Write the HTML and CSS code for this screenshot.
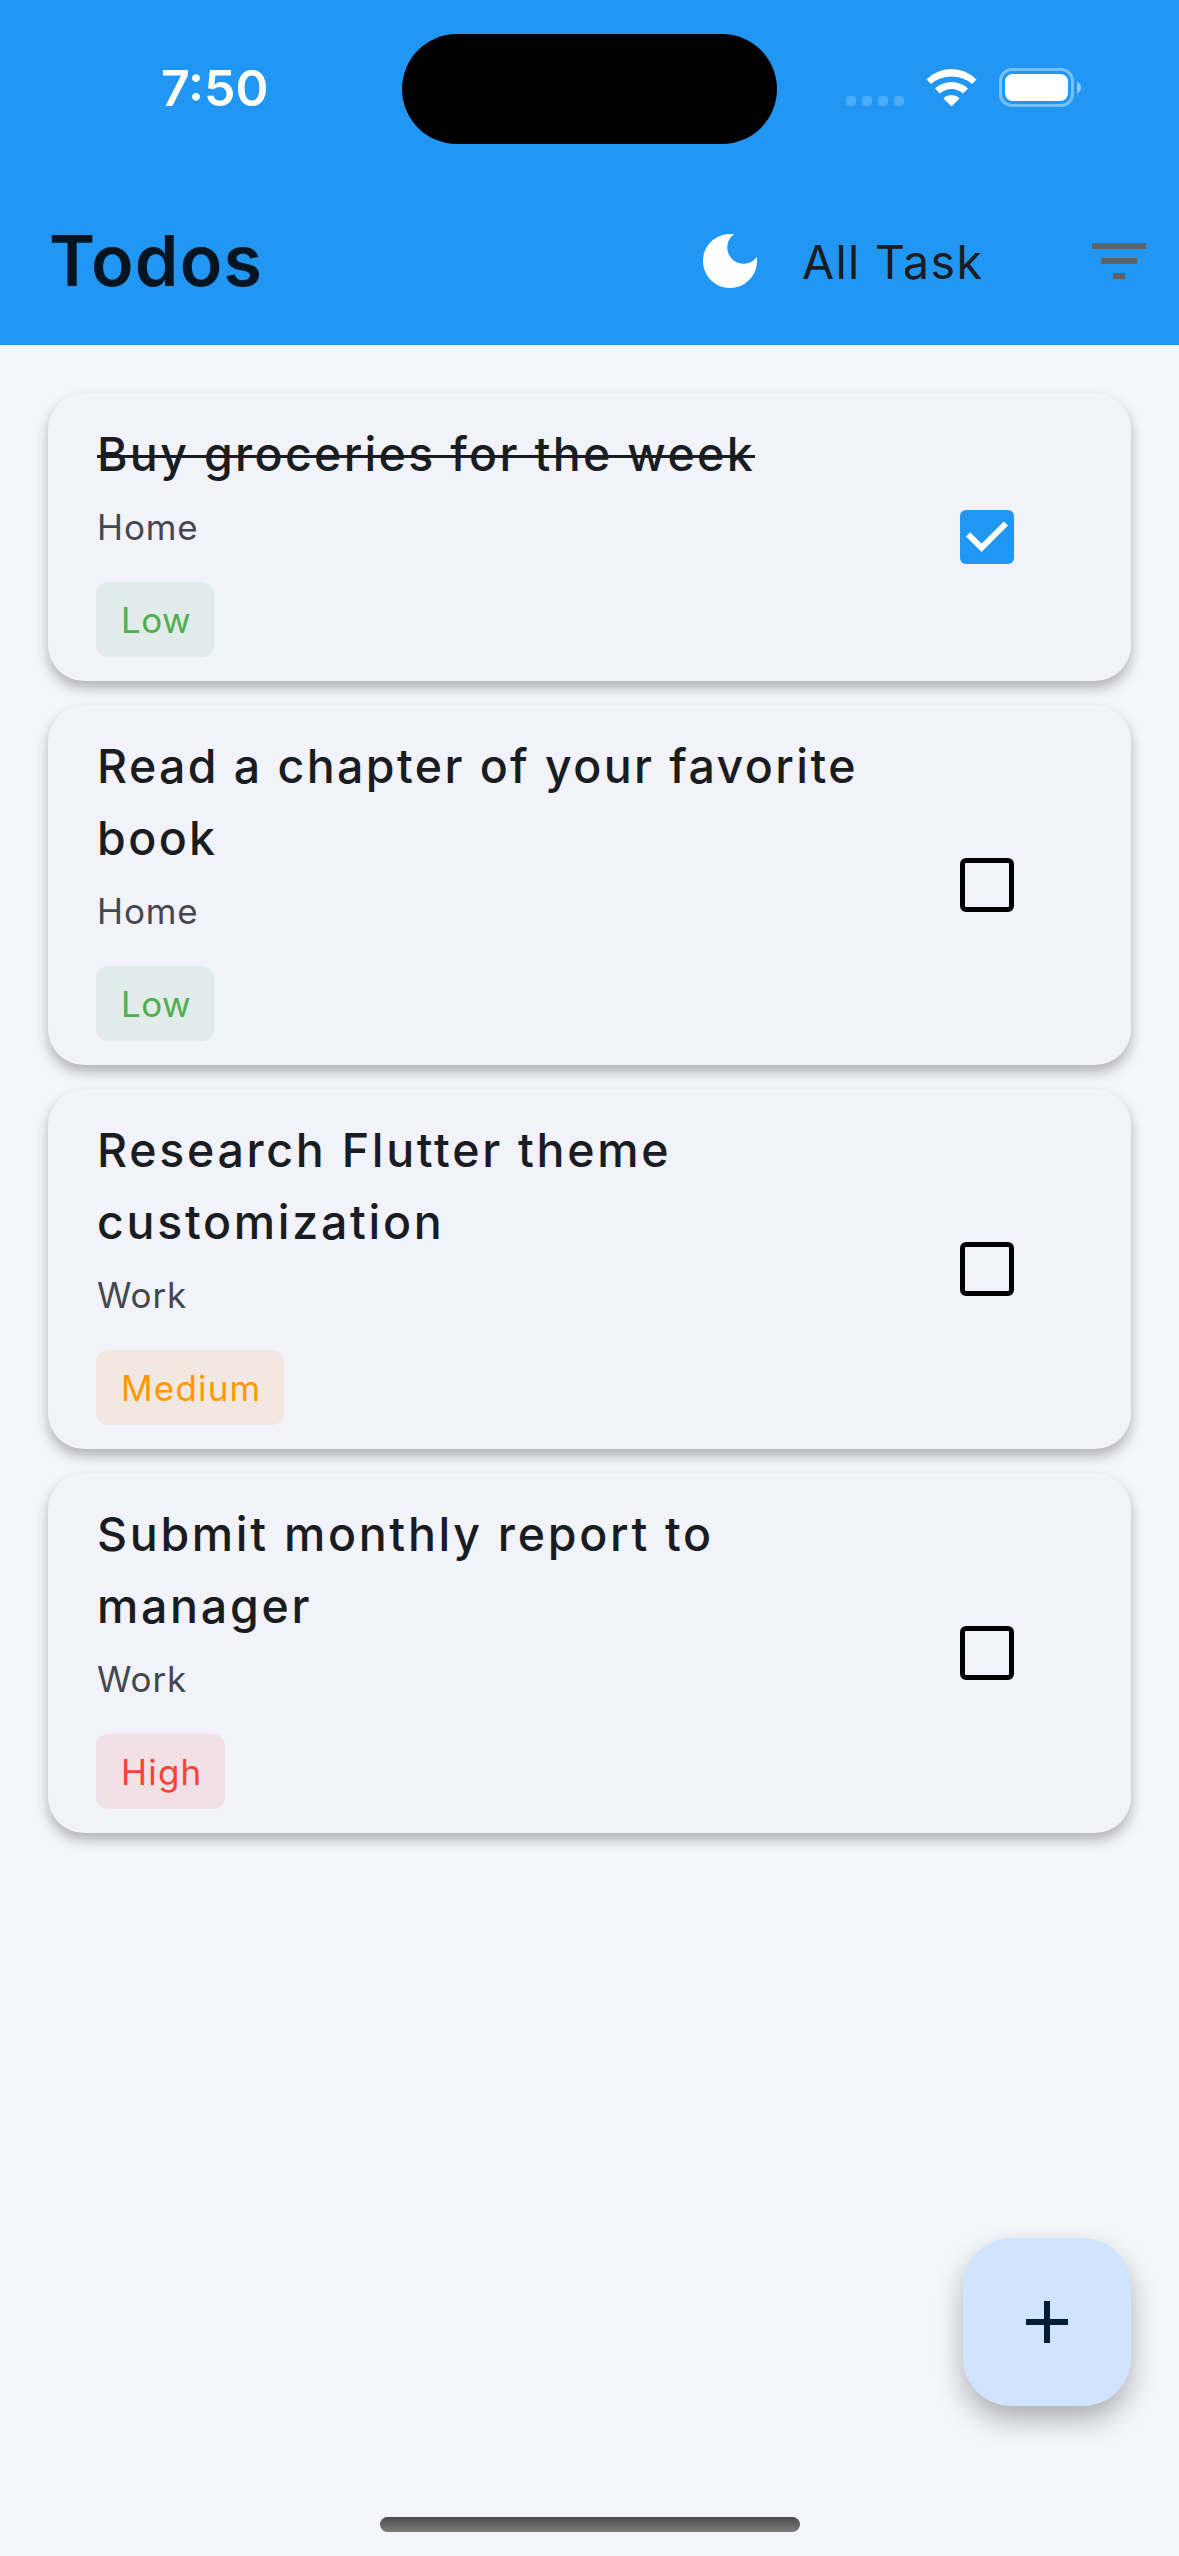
FILE: index.html
```html
<!DOCTYPE html>
<html lang="en">
<head>
<meta charset="utf-8">
<title>Todos</title>
<link rel="stylesheet" href="styles.css">
</head>
<body>
<div class="screen">
  <header class="header">
    <div class="status">
      <span class="time">7:50</span>
      <span class="island"></span>
      <svg class="signal" viewBox="0 0 58 12"><rect x="0" y="1" width="10" height="10" rx="3"/><rect x="16" y="1" width="10" height="10" rx="3"/><rect x="32" y="1" width="10" height="10" rx="3"/><rect x="48" y="1" width="10" height="10" rx="3"/></svg>
      <svg class="wifi" viewBox="0 0 51 37"><path d="M0.500 10.500Q11 0 25.500 0T50.500 10.500L46 15Q37.500 7.500 25.500 7.500T5 15Z"/><path d="M9 19.500Q16 13 25.500 13T42 19.500L37 24.500Q32 20 25.500 20T14 24.500Z"/><path d="M18 28.500Q21 26 25.500 26T33 28.500Q33.500 29.500 33 30L26.500 36.500Q25.500 37.500 24.500 36.500L18 30Q17.500 29.500 18 28.500Z"/></svg>
      <svg class="battery" viewBox="0 0 82 39"><rect class="shell" x="1.500" y="1.500" width="72" height="36" rx="11.500"/><rect x="6" y="6" width="63" height="27" rx="7.500"/><path class="nub" d="M78 13.500Q82 15.500 82 19.500T78 25.500Z"/></svg>
    </div>
    <div class="toolbar">
      <h1 class="title">Todos</h1>
      <svg class="moon" viewBox="0 0 24 24"><path d="M12 3c-4.970 0-9 4.030-9 9s4.030 9 9 9 9-4.030 9-9c0-.460-.040-.920-.100-1.360-.980 1.370-2.580 2.260-4.400 2.260-2.980 0-5.400-2.420-5.400-5.400 0-1.810.890-3.420 2.260-4.400-.440-.060-.900-.100-1.360-.100z"/></svg>
      <span class="filter-name">All Task</span>
      <svg class="filter" viewBox="0 0 24 24"><path d="M10 18h4v-2h-4v2zM3 6v2h18V6H3zm3 7h12v-2H6v2z"/></svg>
    </div>
  </header>
  <main class="list">
    <article class="card">
      <div class="info"><h2 class="task done">Buy groceries for the week</h2><p class="category">Home</p><span class="chip low">Low</span></div>
      <span class="box checked"><svg viewBox="0 0 54 54"><path d="M8.100 24.300L21.600 37.800L45.900 13.500"/></svg></span>
    </article>
    <article class="card">
      <div class="info"><h2 class="task">Read a chapter of your favorite<br>book</h2><p class="category">Home</p><span class="chip low">Low</span></div>
      <span class="box"></span>
    </article>
    <article class="card">
      <div class="info"><h2 class="task loose">Research Flutter theme<br>customization</h2><p class="category">Work</p><span class="chip medium">Medium</span></div>
      <span class="box"></span>
    </article>
    <article class="card">
      <div class="info"><h2 class="task loose">Submit monthly report to<br>manager</h2><p class="category">Work</p><span class="chip high">High</span></div>
      <span class="box"></span>
    </article>
  </main>
  <button class="fab" aria-label="Add task"><svg viewBox="0 0 24 24"><path d="M19 13h-6v6h-2v-6H5v-2h6V5h2v6h6v2z"/></svg></button>
  <div class="home-bar"></div>
</div>
</body>
</html>
```
FILE: styles.css
```css
* { box-sizing: border-box; margin: 0; padding: 0; }
body { font-family: Inter, "Liberation Sans", sans-serif; background: #f5f6fa; color: #191c20; }
svg { display: block; flex: none; }

.screen { position: relative; height: 2556px; overflow: hidden; background: #f5f6fa; }

.header { height: 345px; background: #2196f3; }
.status { display: flex; height: 177px; padding-top: 34px; fill: #fff; color: #fff; }
.time { width: 402px; padding: 22px 0 0 161px; font-size: 50px; line-height: 64px; font-weight: 600; }
.island { width: 375px; height: 110px; border-radius: 55px; background: #000; }
.signal { width: 58px; height: 12px; margin: 61px 0 0 69px; fill: rgba(255, 255, 255, .2); }
.wifi { width: 51px; height: 37px; margin: 35px 0 0 22px; }
.battery { width: 82px; height: 39px; margin: 34px 0 0 22px; }
.shell { fill: none; stroke: rgba(255, 255, 255, .4); stroke-width: 3; }
.nub { fill: rgba(255, 255, 255, .5); }

.toolbar { display: flex; align-items: center; height: 168px; padding: 0 23px 0 49px; }
.title { width: 645px; font-size: 70px; line-height: 84px; font-weight: 570; letter-spacing: 1.200px; color: #041420; }
.moon { width: 72px; height: 72px; fill: #fff; }
.filter-name { width: 281px; margin-left: 36px; padding-top: 2px; font-size: 46.500px; line-height: 72px; font-weight: 430; letter-spacing: 1.350px; }
.filter { width: 72px; height: 72px; fill: #616161; }

.list { display: flex; flex-direction: column; gap: 24px; padding: 48px 48px 0; }
.card { display: flex; align-items: center; justify-content: space-between; padding: 24px 117px 24px 48px; border-radius: 36px; background: #f2f2fb; box-shadow: 0 7px 13px rgba(0, 0, 0, .28); }
.info { display: flex; flex-direction: column; align-items: flex-start; }
.task { padding: 1px 0 0 1px; font-size: 46.500px; line-height: 72px; font-weight: 500; letter-spacing: 2.400px; white-space: nowrap; }
.loose { letter-spacing: 2.700px; }
.done { letter-spacing: 2.320px; text-decoration: line-through; text-decoration-thickness: 3px; }
.category { margin-bottom: 17px; padding-left: 1px; font-size: 35px; line-height: 75px; letter-spacing: .900px; color: #43474e; }
.chip { height: 75px; padding: 1px 23px 0 25px; border-radius: 12px; font-size: 35px; line-height: 75px; letter-spacing: 1.200px; }
.low { color: #4caf50; background: rgba(76, 175, 80, .1); letter-spacing: .400px; }
.medium { color: #ff9800; background: rgba(255, 152, 0, .1); }
.high { color: #f44336; background: rgba(244, 67, 54, .1); }
.box { flex: none; width: 54px; height: 54px; border: 5px solid #000; border-radius: 6px; }
.checked { border: 0; background: #2196f3; }
.checked path { fill: none; stroke: #fff; stroke-width: 6; }

.fab { position: absolute; right: 48px; bottom: 150px; display: grid; place-items: center; width: 168px; height: 168px; border: 0; border-radius: 48px; background: #d1e4ff; box-shadow: 0 14px 30px -2px rgba(0, 0, 0, .32); }
.fab svg { width: 72px; height: 72px; fill: #001d36; }
.home-bar { position: absolute; left: 380px; bottom: 24px; width: 420px; height: 15px; border-radius: 8px; background: linear-gradient(#4a4a4a, #7c7c7d); }
```
